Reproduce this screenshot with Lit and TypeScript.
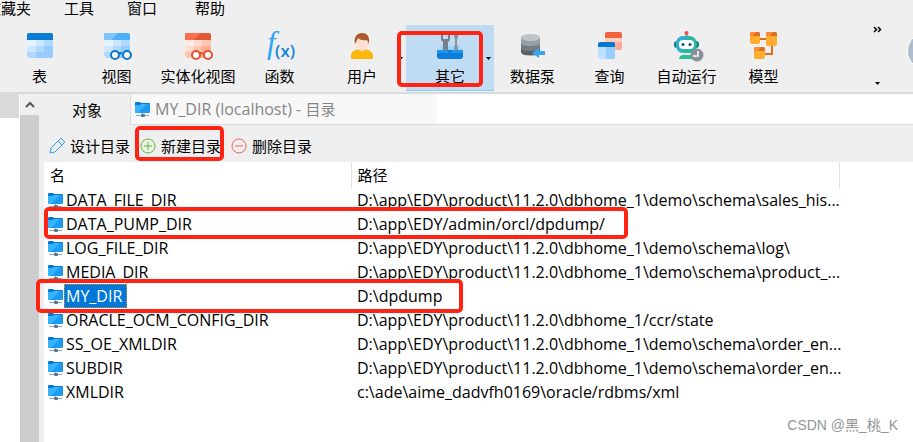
import { LitElement, html, css, svg } from "lit";
import { customElement, state } from "lit/decorators.js";
import { classMap } from "lit/directives/class-map.js";

const gridCells = (c: string[]) => svg`<g shape-rendering="crispEdges">
  <path d="M1 6h9v7H1z" fill=${c[0]}></path>
  <path d="M10 6h8v7h-8zM1 13h9v6H1z" fill=${c[1]}></path>
  <path d="M18 6h9v7h-9zM10 13h8v6h-8zM1 19h9v6H3l-2-2z" fill=${c[2]}></path>
  <path d="M18 13h9v10l-2 2H10v-6h8z" fill=${c[3]}></path>
</g>`;

const BLUES = ["#e3f3ff", "#cce7ff", "#b0d9ff", "#96ccff"];
const REDS = ["#ffeae6", "#ffdccb", "#ffc5b0", "#ffab95"];

const glasses = (c: string) => svg`
  <path d="M15 21q2 -2 4 0" fill="none" stroke=${c} stroke-width="2"></path>
  <circle cx="12" cy="22" r="4" fill="#fff" stroke=${c} stroke-width="2"></circle>
  <circle cx="24" cy="22" r="4" fill="#fff" stroke=${c} stroke-width="2"></circle>`;

const modelBox = (x: number, y: number, w: number, h: number) => svg`
  <rect x=${x} y=${y} width=${w} height=${h} rx="2" fill="#ffae30"></rect>
  <path d="M${x} ${y + 4}v-2q0 -2 2 -2h${w - 4}q2 0 2 2v2z" fill="#dc7020"></path>
  <path d="M${x} ${y + 4}v-2q0 -2 2 -2h${w - 6}l-3 4z" fill="#ff8a35"></path>`;

const ICONS: Record<string, unknown> = {
  table: svg`
    ${gridCells(BLUES)}
    <path d="M1 7V2q0-2 2-2h22q2 0 2 2v5z" fill="#0a7cd6"></path>`,
  view: svg`
    ${gridCells(BLUES)}
    <path d="M1 7V2q0-2 2-2h22q2 0 2 2v5z" fill="#4aaefa"></path>
    <path d="M1 7V2q0-2 2-2h12l-7 7z" fill="#7dc5ff"></path>
    ${glasses("#0a78cf")}`,
  mview: svg`
    ${gridCells(REDS)}
    <path d="M1 7V2q0-2 2-2h22q2 0 2 2v5z" fill="#e25a33"></path>
    <path d="M1 7V2q0-2 2-2h14l-7 7z" fill="#fb6f4d"></path>
    ${glasses("#e2522f")}`,
  fn: svg`
    <text x="1" y="20" class="f">f</text>
    <text x="9" y="24" class="x">(x)</text>`,
  user: svg`
    <path d="M3 26v-3q0-6 8-6.500h6q8 .5 8 6.500v3z" fill="#fbb80b"></path>
    <path d="M11 13h6v4q-3 3-6 0z" fill="#fbd3c1"></path>
    <circle cx="14" cy="10" r="7" fill="#ffe0d2"></circle>
    <path d="M7 11q-1-3 0-6 2-5 7-5t6.500 4q1 3 .5 7l-2-4q-6 1-9-2z" fill="#a85a28"></path>`,
  tools: svg`
    <path d="M2 17l3-4h18l3 4z" fill="#9bd3fb"></path>
    <path d="M5 2v4q0 2 2 3v9h5V9q2-1 2-3V2h-2v4H7V2z" fill="#75828c"></path>
    <path d="M18 2h4v3l-1 1v6q1 1 1 6h-4q0-5 1-6V6l-1-1z" fill="#8a969f"></path>
    <path d="M1 17h26v6q0 3-3 3H4q-3 0-3-3z" fill="#0a7ed8"></path>
    <path d="M1 17h10l2 3h2l2-3h10v3H1z" fill="#2196ea"></path>`,
  pump: svg`
    <path d="M2 4v15q0 3.500 9.500 3.500T21 19V4z" fill="#5b6067"></path>
    <path d="M2 4v11q0 3 9.500 3T21 15V4z" fill="#757d84"></path>
    <path d="M2 4v6q0 3 9.500 3T21 10V4z" fill="#979fa5"></path>
    <ellipse cx="11.500" cy="4.500" rx="9.500" ry="3.500" fill="#bfc4c8"></ellipse>
    <path d="M13 20l7-5v3h6v4h-6v3z" fill="#38a5ed"></path>`,
  query: svg`
    <path d="M9 4h17v11q0 2-2 2H9z" fill="#ffd0c0"></path>
    <path d="M17 9h9v6q0 2-2 2h-7z" fill="#ffab98"></path>
    <path d="M9 5V1q0-2 2-2h13q2 0 2 2v4z" fill="#f06440"></path>
    <path d="M2 14h17v10q0 2-2 2H4q-2 0-2-2z" fill="#bfe1ff"></path>
    <path d="M10 14h9v10q0 2-2 2h-7z" fill="#98cdff"></path>
    <path d="M2 14v-3q0-2 2-2h13q2 0 2 2v3z" fill="#0a78d0"></path>`,
  robot: svg`
    <path d="M13.500 0v4" stroke="#24a99c" stroke-width="2"></path>
    <circle cx="13.500" cy="0" r="2" fill="#ff4b46"></circle>
    <rect x="1" y="8" width="25" height="7" rx="3" fill="#187c80"></rect>
    <rect x="3" y="3" width="21" height="17" rx="8" fill="#28b7a4"></rect>
    <path d="M3 11q0-8 8-8h3L8 20q-5-2-5-9z" fill="#30aed0"></path>
    <rect x="6" y="7" width="15" height="9" rx="4" fill="#fff"></rect>
    <circle cx="10" cy="11.500" r="1.500" fill="#164b78"></circle>
    <circle cx="17" cy="11.500" r="1.500" fill="#164b78"></circle>
    <path d="M6 26q1-5 7-4h7v4z" fill="#2cc092"></path>
    <circle cx="24" cy="22" r="6.500" fill="#89929a"></circle>
    <path d="M25 18v5h-5" fill="none" stroke="#fff" stroke-width="1.500"></path>`,
  model: svg`
    <path d="M10 6h9M22 12v9h-10" fill="none" stroke="#d97020" stroke-width="2"></path>
    ${modelBox(0, -1, 10, 12)}${modelBox(16, -1, 11, 14)}${modelBox(4, 14, 11, 12)}`,
};

interface Tool {
  label: string;
  icon: string;
  kind?: "wide" | "drop";
}

const TOOLS: Tool[] = [
  { label: "表", icon: "table" },
  { label: "视图", icon: "view" },
  { label: "实体化视图", icon: "mview", kind: "wide" },
  { label: "函数", icon: "fn" },
  { label: "用户", icon: "user", kind: "drop" },
  { label: "其它", icon: "tools", kind: "drop" },
  { label: "数据泵", icon: "pump" },
  { label: "查询", icon: "query" },
  { label: "自动运行", icon: "robot" },
  { label: "模型", icon: "model" },
];

const HOME = "D:\\app\\EDY\\product\\11.2.0\\dbhome_1";

const DIRS = [
  { name: "DATA_FILE_DIR", path: HOME + "\\demo\\schema\\sales_his..." },
  { name: "DATA_PUMP_DIR", path: "D:\\app\\EDY/admin/orcl/dpdump/", mark: "pump" },
  { name: "LOG_FILE_DIR", path: HOME + "\\demo\\schema\\log\\" },
  { name: "MEDIA_DIR", path: HOME + "\\demo\\schema\\product_..." },
  { name: "MY_DIR", path: "D:\\dpdump", mark: "mine" },
  { name: "ORACLE_OCM_CONFIG_DIR", path: HOME + "/ccr/state" },
  { name: "SS_OE_XMLDIR", path: HOME + "\\demo\\schema\\order_en..." },
  { name: "SUBDIR", path: HOME + "\\demo\\schema\\order_en..." },
  { name: "XMLDIR", path: "c:\\ade\\aime_dadvfh0169\\oracle/rdbms/xml" },
];

const folder = html`<svg class="folder" viewBox="0 0 16 16" aria-hidden="true">
  <path d="M0 2q0-1 1-1h4l1 1h8q1 0 1 1v3H0z" fill="#0878cc"></path>
  <path d="M0 4h5l1-1h9v8q0 1-1 1H1q-1 0-1-1z" fill="#1a9bf0"></path>
  <path d="M0 4h5l1-1h6L3 12H1q-1 0-1-1z" fill="#35b3ff"></path>
  <path d="M1 14.500h13M7.500 12v2" stroke="#8ba7bd" stroke-width="1"></path>
  <rect x="6" y="13" width="4" height="3" rx="1" fill="#54799c"></rect>
</svg>`;

@customElement("app-root")
export class AppRoot extends LitElement {
  @state() private activeTool = "其它";
  @state() private selected = "MY_DIR";

  static styles = css`
    :host {
      display: flex;
      flex-direction: column;
      position: relative;
      min-height: 100vh;
      overflow: hidden;
      background: #fff;
      color: #000;
      font: 15px/20px "Open Sans", "Noto Sans CJK SC", sans-serif;
    }
    button {
      font: inherit;
      color: inherit;
      background: none;
      border: 0;
      padding: 0;
      white-space: nowrap;
    }
    .menu {
      display: flex;
      height: 25px;
      background: #efefef;
    }
    .menu button {
      height: 16px;
      line-height: 16px;
      margin-right: 33px;
    }
    .menu button:first-child {
      margin-left: -14px;
    }
    .menu .roomy {
      margin-right: 38px;
    }
    .tools {
      display: flex;
      height: 67px;
      padding-left: 1px;
      background: #efefef;
      border-bottom: 2px solid #dadada;
    }
    .tool {
      position: relative;
      flex: none;
      display: flex;
      flex-direction: column;
      align-items: center;
      gap: 5px;
      width: 77px;
      height: 66px;
      padding-top: 8px;
    }
    .tool.wide {
      width: 86px;
    }
    .tool.drop {
      width: 88px;
    }
    .tool.active {
      background: #c0dcf3;
      border-bottom: 1px solid #90c8f6;
    }
    .icon {
      width: 28px;
      height: 28px;
      overflow: visible;
    }
    .f {
      font: italic 31px "Liberation Serif", serif;
      fill: #2aa4f4;
    }
    .x {
      font: 600 17px "Open Sans", sans-serif;
      fill: #1583dc;
    }
    .caret {
      width: 5px;
      height: 3px;
      background: #000;
      clip-path: polygon(0 0, 100% 0, 50% 100%);
    }
    .tool .caret {
      position: absolute;
      right: 3px;
      top: 32px;
    }
    .more {
      display: flex;
      flex-direction: column;
      align-items: center;
      justify-content: space-between;
      margin-left: auto;
      padding-bottom: 7px;
    }
    .more svg {
      width: 9px;
      height: 7px;
      margin-top: 1px;
    }
    .avatar {
      flex: none;
      width: 36px;
      height: 36px;
      margin: 7px -32px 0 25px;
      border: 1px solid #fff;
      border-radius: 50%;
      background: #aebccd;
    }
    .body {
      display: flex;
      flex: 1;
    }
    .tree {
      width: 20px;
      background: linear-gradient(#d9d9d9, #d9d9d9) 0 0 / 19px 24px no-repeat;
    }
    .scroll {
      display: flex;
      flex-direction: column;
      width: 24px;
      background: #efefef;
    }
    .up {
      display: flex;
      align-items: center;
      justify-content: center;
      width: 19px;
      height: 21px;
    }
    .up svg {
      width: 10px;
      height: 7px;
    }
    .thumb {
      flex: 1;
      width: 19px;
      background: #cdcdcd;
    }
    .main {
      flex: 1;
      min-width: 0;
    }
    .tabs {
      display: flex;
      height: 30px;
      border-bottom: 1px solid #dcdcdc;
    }
    .tab {
      width: 86px;
      height: 31px;
      background: #efefef;
    }
    .tab.file {
      display: flex;
      align-items: center;
      gap: 4px;
      width: 307px;
      height: 30px;
      padding-left: 4px;
      border-left: 1px solid #dcdcdc;
      background: #f8f8f8;
      color: #868686;
    }
    .latin {
      font-size: 16px;
    }
    .actions {
      display: flex;
      gap: 16px;
      height: 37px;
      padding-left: 5px;
      background: #efefef;
    }
    .action {
      position: relative;
      display: flex;
      align-items: center;
      gap: 5px;
      height: 42px;
    }
    .action + .action {
      margin-left: -6px;
    }
    .action svg {
      width: 16px;
      height: 16px;
      overflow: visible;
    }
    table {
      width: 796px;
      table-layout: fixed;
      border-collapse: collapse;
    }
    th {
      box-sizing: border-box;
      height: 26px;
      padding: 0 6px;
      border-right: 1px solid #e2e2e2;
      font-weight: 400;
      text-align: left;
    }
    .name {
      width: 307px;
    }
    td {
      height: 24px;
      padding: 0 6px;
      font-size: 16px;
      white-space: nowrap;
    }
    .namecell {
      position: relative;
      padding: 0 4px;
    }
    .row {
      display: flex;
      align-items: center;
    }
    .folder {
      flex: none;
      width: 16px;
      height: 16px;
    }
    .label {
      padding: 0 4px 0 1px;
      border: 1px solid transparent;
      line-height: 22px;
    }
    .selected .label {
      border: 1px dotted #e09040;
      background: #0078d7;
      color: #fff;
    }
    .mark {
      position: absolute;
      z-index: 2;
      box-sizing: border-box;
      border: 4px solid #ff2314;
      border-radius: 5px;
      pointer-events: none;
    }
    .mark.tooling {
      inset: 6px 11px 3px -9px;
    }
    .mark.create {
      inset: 1px -3px 6px -5px;
    }
    .mark.pump {
      left: 0;
      top: -5px;
      width: 584px;
      height: 32px;
    }
    .mark.mine {
      left: -8px;
      top: -5px;
      width: 427px;
      height: 34px;
    }
    .credit {
      position: absolute;
      right: 15px;
      bottom: 7px;
      color: #92959a;
      font: 14px/20px "Liberation Sans", "Noto Sans CJK SC", sans-serif;
    }
  `;

  render() {
    return html`
      <nav class="menu">
        <button>收藏夹</button>
        <button>工具</button>
        <button class="roomy">窗口</button>
        <button>帮助</button>
      </nav>
      <div class="tools">
        ${TOOLS.map(
          (t) => html`<button
            class=${classMap({
              tool: true,
              wide: t.kind === "wide",
              drop: t.kind === "drop",
              active: t.label === this.activeTool,
            })}
            @click=${() => (this.activeTool = t.label)}
          >
            <svg class="icon" viewBox="0 0 28 28" aria-hidden="true">${ICONS[t.icon]}</svg>
            <span>${t.label}</span>
            ${t.kind === "drop" ? html`<i class="caret"></i>` : ""}
            ${t.icon === "tools" ? html`<i class="mark tooling"></i>` : ""}
          </button>`
        )}
        <button class="more" aria-label="更多">
          <svg viewBox="0 0 9 7"><path d="M1 1l2.500 2.500L1 6M5 1l2.500 2.500L5 6" fill="none" stroke="#000" stroke-width="1.500"></path></svg>
          <i class="caret"></i>
        </button>
        <div class="avatar"></div>
      </div>
      <div class="body">
        <div class="tree"></div>
        <div class="scroll">
          <button class="up" aria-label="向上滚动">
            <svg viewBox="0 0 10 7"><path d="M1 6l4-4 4 4" fill="none" stroke="#555" stroke-width="2"></path></svg>
          </button>
          <div class="thumb"></div>
        </div>
        <main class="main">
          <div class="tabs">
            <button class="tab">对象</button>
            <button class="tab file">${folder}<span><span class="latin">MY_DIR (localhost) - </span>目录</span></button>
          </div>
          <div class="actions">
            <button class="action">
              <svg viewBox="0 0 16 16"><path d="M1 15l1-5 9-9q1-1 2 0l2 2q1 1 0 2l-9 9zM9 3l4 4" fill="none" stroke="#2aa0e8"></path></svg>
              设计目录
            </button>
            <button class="action">
              <svg viewBox="0 0 16 16"><circle cx="8" cy="8" r="7" fill="none" stroke="#55c02a"></circle><path d="M4 8h8M8 4v8" stroke="#55c02a"></path></svg>
              新建目录
              <i class="mark create"></i>
            </button>
            <button class="action">
              <svg viewBox="0 0 16 16"><circle cx="8" cy="8" r="7" fill="none" stroke="#f0604c"></circle><path d="M4 8h8" stroke="#f0604c"></path></svg>
              删除目录
            </button>
          </div>
          <table>
            <thead>
              <tr><th class="name">名</th><th>路径</th></tr>
            </thead>
            <tbody>
              ${DIRS.map(
                (d) => html`<tr
                  class=${classMap({ selected: d.name === this.selected })}
                  @click=${() => (this.selected = d.name)}
                >
                  <td class="namecell">
                    <div class="row">${folder}<span class="label">${d.name}</span></div>
                    ${d.mark ? html`<i class="mark ${d.mark}"></i>` : ""}
                  </td>
                  <td>${d.path}</td>
                </tr>`
              )}
            </tbody>
          </table>
        </main>
      </div>
      <span class="credit">CSDN @黑_桃_K</span>
    `;
  }
}
